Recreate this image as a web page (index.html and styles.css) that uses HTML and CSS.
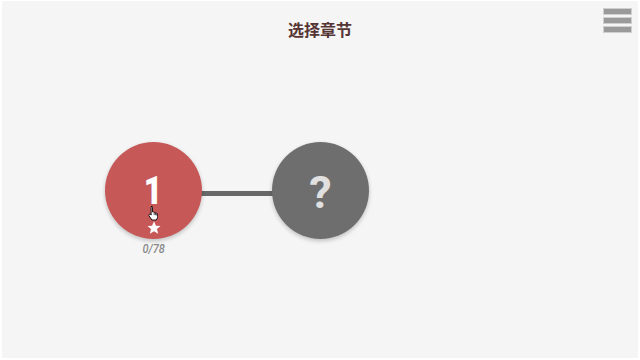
FILE: index.html
```html
<!DOCTYPE html>
<html>
<head>
<meta charset="utf-8">
<link rel="stylesheet" href="styles.css">
</head>
<body>
<div class="stage">
  <header class="topbar">
    <h1 class="title">选择章节</h1>
    <button class="menu" aria-label="menu">
      <span class="bar"></span><span class="bar"></span><span class="bar"></span>
    </button>
  </header>
  <main class="map">
    <div class="chapter">
      <div class="node node-open">
        <span class="num">1</span>
        <svg class="star" viewBox="0 0 24 23" width="16" height="14"><path d="M12 0.5l3.1 7.2 7.6.6-5.8 5 1.8 7.5L12 16.8l-6.7 4 1.8-7.5-5.8-5 7.6-.6z" fill="#fff"/></svg>
        <svg class="cursor" viewBox="0 0 16 18" width="14" height="16"><path d="M5 1.5c.8 0 1.3.6 1.3 1.3v5l.4-.1c.7-.2 1.3.1 1.5.7.6-.3 1.3-.1 1.6.5.6-.3 1.4 0 1.6.7l.6 3.3c.2 1-.1 2-.6 2.8L10.5 17H5.6L2.3 12.2c-.4-.6-.3-1.4.3-1.8.5-.3 1.2-.2 1.6.3l.5.7V2.8c0-.7.5-1.3 1.3-1.3z" fill="#fff" stroke="#000" stroke-width="1"/><path d="M8.2 8.4v3M9.8 8.9v2.6M11.4 9.6v2" stroke="#000" stroke-width=".8"/></svg>
      </div>
      <div class="score">0/78</div>
    </div>
    <div class="link"></div>
    <div class="chapter">
      <div class="node node-locked"><span class="q">?</span></div>
      <div class="score empty"></div>
    </div>
  </main>
</div>
</body>
</html>
```
FILE: styles.css
```css
html, body { margin: 0; padding: 0; background: #fff; }
body { padding: 1px 2px 2px 2px; width: 640px; height: 360px; box-sizing: border-box; }
.stage {
  position: relative;
  background: #f5f5f5;
  width: 100%;
  height: 100%;
  font-family: "Roboto", "Noto Sans CJK SC", sans-serif;
}
.topbar { height: 56px; display: flex; justify-content: center; }
.title {
  margin: 0;
  padding-top: 19px;
  font-family: "Noto Sans CJK SC", sans-serif;
  font-size: 16px;
  font-weight: 700;
  color: #553434;
  line-height: 18px;
}
.menu {
  position: absolute;
  right: 6px;
  top: 7px;
  width: 29px;
  padding: 0;
  border: 0;
  background: none;
  display: flex;
  flex-direction: column;
  gap: 2px;
}
.bar {
  display: block;
  height: 7px;
  background: #9a9a9a;
  border: 1px solid #cfcfcf;
  box-sizing: border-box;
}
.map {
  display: flex;
  align-items: flex-start;
  padding-left: 103px;
  padding-top: 85px;
}
.chapter { display: flex; flex-direction: column; align-items: center; width: 97px; }
.node {
  width: 97px;
  height: 97px;
  border-radius: 50%;
  position: relative;
  display: flex;
  flex-direction: column;
  align-items: center;
  box-shadow: 0 2px 4px rgba(0,0,0,0.22);
  box-sizing: border-box;
}
.node-open { background: #c75858; padding-top: 30px; }
.node-locked { background: #6e6e6e; justify-content: center; }
.num {
  color: #fff;
  font-family: "Roboto", sans-serif;
  font-weight: 900;
  font-size: 38px;
  line-height: 38px;
  height: 38px;
  transform: scaleX(0.85);
}
.star { margin-top: 11px; display: block; }
.cursor { position: absolute; left: 42px; top: 63px; }
.q {
  color: #e0e0e0;
  font-family: "Roboto", sans-serif;
  font-weight: 700;
  font-size: 45px;
  line-height: 45px;
  margin-top: 4px;
}
.score {
  margin-top: 3px;
  font-size: 12.5px;
  font-weight: 500;
  font-style: italic;
  color: #8a8a8a;
  height: 14px;
  line-height: 14px;
  transform: scaleX(0.88);
}
.link {
  width: 72px;
  height: 5px;
  background: #696969;
  margin: 49px -1px 0;
}
```
